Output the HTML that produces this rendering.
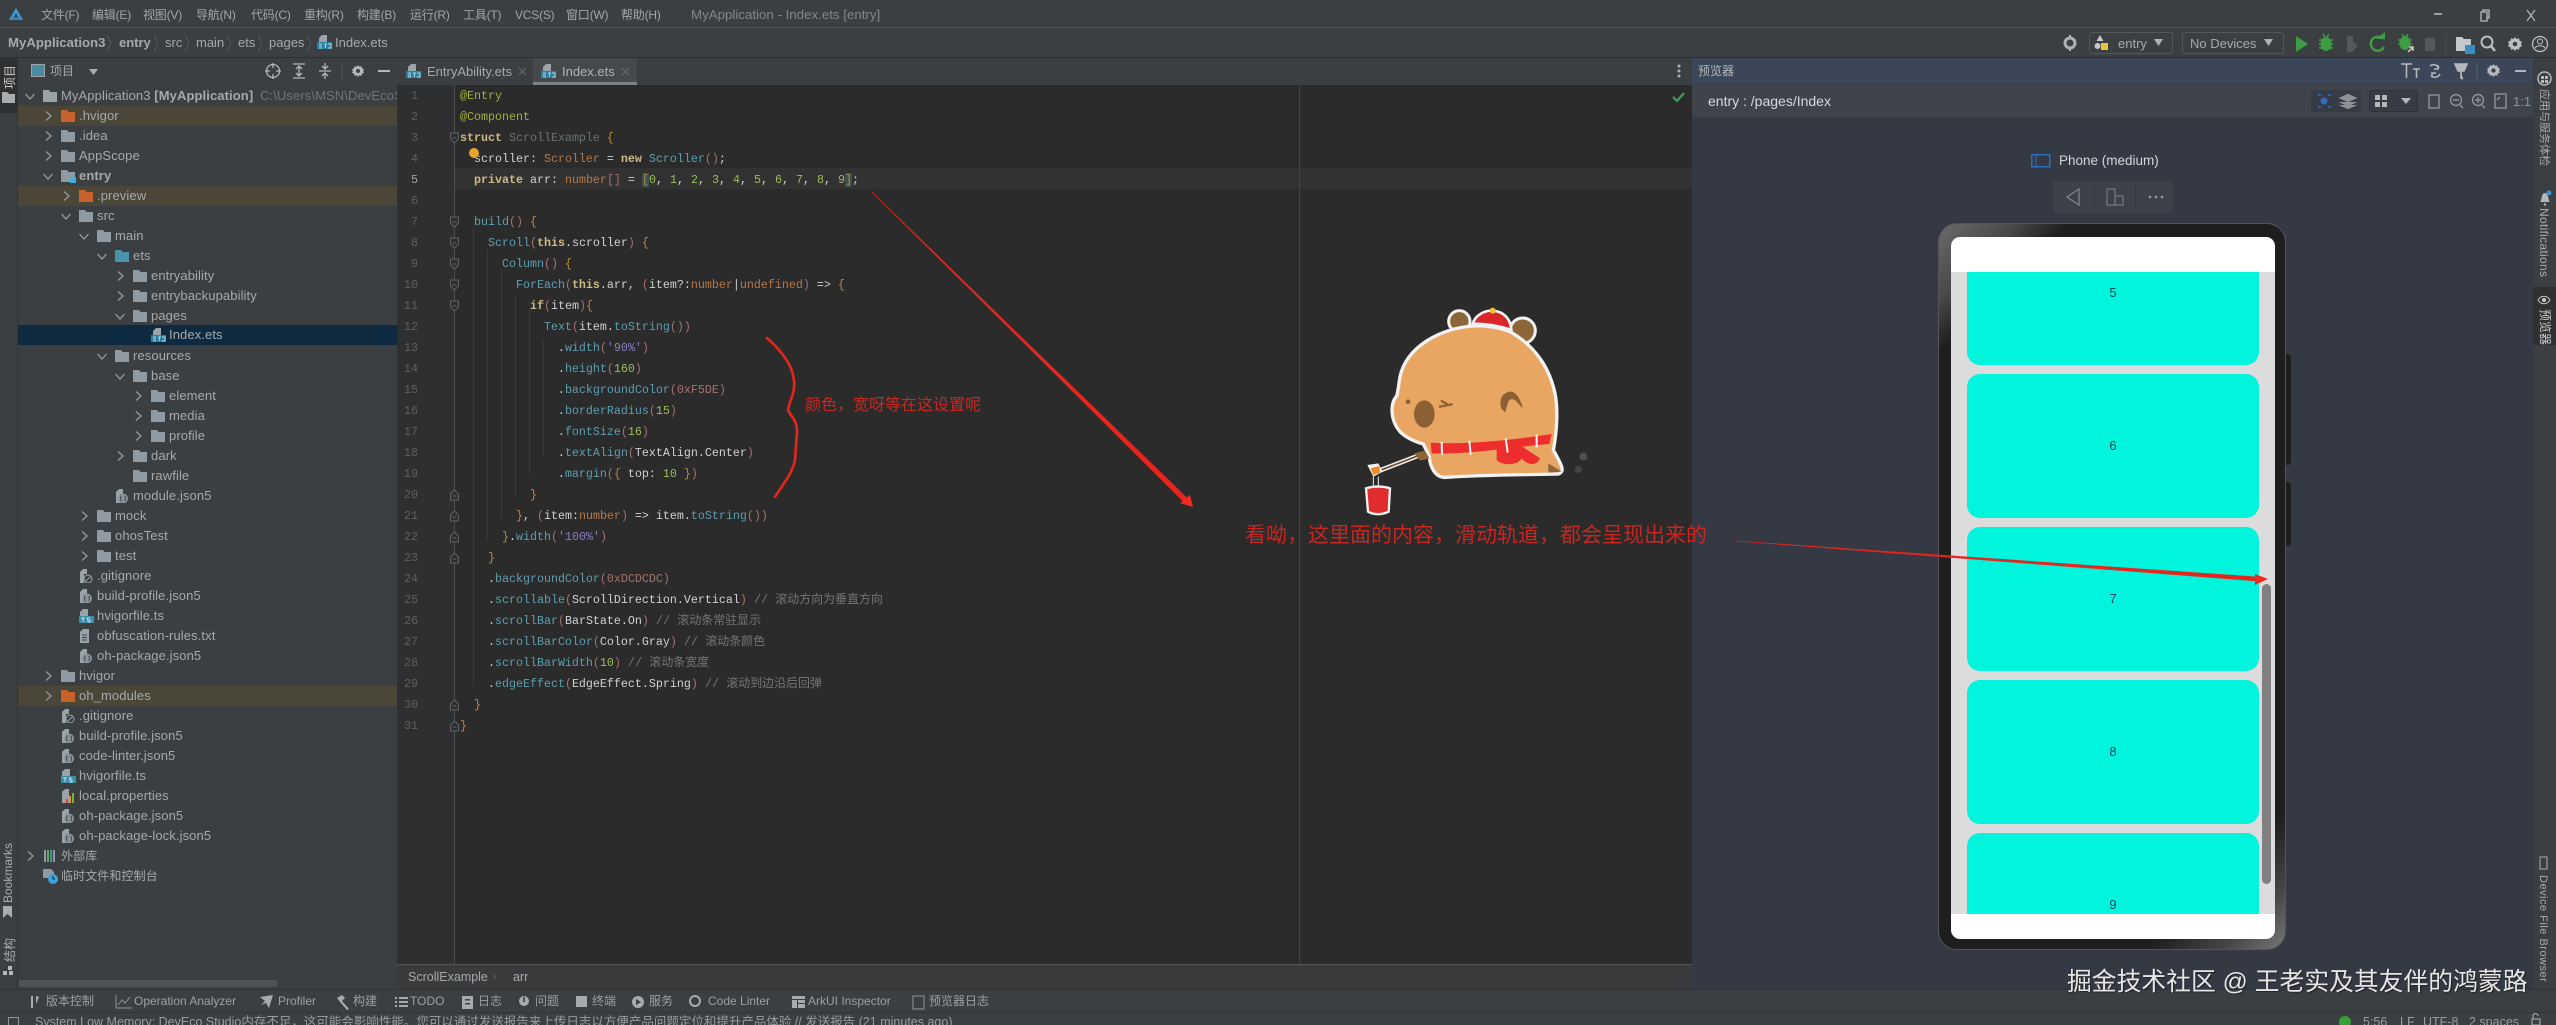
<!DOCTYPE html>
<html lang="zh"><head><meta charset="utf-8"><title>MyApplication - Index.ets</title>
<style>
*{margin:0;padding:0;box-sizing:border-box}
html,body{width:2556px;height:1025px;overflow:hidden;background:#3c3f41}
body{position:relative;font-family:"Liberation Sans","Noto Sans CJK SC",sans-serif;font-size:13px;color:#a6a9ab}
.a,.t0,svg.p{position:absolute}
.t0{white-space:nowrap;line-height:16px}
.mn{font-size:12px;letter-spacing:-.2px;color:#a3a6a8}
.r{position:absolute;left:18px;width:379px;height:20px;line-height:20px;white-space:nowrap}
.r>span{position:absolute;left:calc(var(--x) - 18px);top:0;font-size:13px;letter-spacing:.1px}
.r>svg{position:absolute;top:3px;width:14px;height:14px;left:calc(var(--x) - 36px)}
.r>svg.c{left:calc(var(--x) - 55px);width:12px;height:12px;top:4px;color:#979b9d}
.o{background:#4a4738}
pre{font-family:"Liberation Mono","Noto Sans CJK SC",monospace;font-size:11.67px;line-height:21px;position:absolute}
.k{color:#cdbb85;font-weight:bold}.an{color:#a3ae3c}.d{color:#68736d}.y{color:#b3784a}.m{color:#5c9eae}.n{color:#9cbc5a}.s{color:#8d7cc3}.b{color:#b9893f}.w{color:#cfd2d2}.g{color:#757575;font-size:11.95px}.v{color:#5e7f8a}.p2{color:#a5726f}
.tb{font-size:12px;color:#9da0a2}
.vr{position:absolute;writing-mode:vertical-rl;white-space:nowrap;font-size:12px;color:#a8abad}
.vl{position:absolute;writing-mode:vertical-rl;transform:rotate(180deg);white-space:nowrap;font-size:12px;color:#a8abad}
.card{position:absolute;left:1967px;width:292px;height:144px;background:#00f5dc;border-radius:13px;text-align:center;line-height:144px;color:#124a55;font-size:13px}
</style></head><body>
<svg width="0" height="0" style="position:absolute">
<defs>
<symbol id="cr" viewBox="0 0 12 12"><path d="M4 1.5 9 6 4 10.500" fill="none" stroke="currentColor" stroke-width="1.300"/></symbol>
<symbol id="cd" viewBox="0 0 12 12"><path d="M1.500 4 6 9 10.500 4" fill="none" stroke="currentColor" stroke-width="1.300"/></symbol>
<symbol id="fo" viewBox="0 0 14 14"><path d="M0 1h6l1.500 2H14v10H0z" fill="currentColor"/></symbol>
<symbol id="js" viewBox="0 0 14 14"><path d="M1 3 4 0h4v5H5v9H1z" fill="#9aa3a8"/><circle cx="8" cy="9.500" r="5" fill="#8b9499"/><path d="M6.500 7c-1 0-.6 2.500-1.300 2.500.7 0 .3 2.500 1.300 2.500M9.500 7c1 0 .6 2.500 1.300 2.500-.7 0-.3 2.500-1.300 2.500" fill="none" stroke="#3c3f41"/></symbol>
<symbol id="gi" viewBox="0 0 14 14"><path d="M1 3 4 0h4v5H5v9H1z" fill="#9aa3a8"/><circle cx="9" cy="10" r="4" fill="#3c3f41" stroke="#9aa3a8"/><path d="m6.500 12.500 5-5" stroke="#9aa3a8"/></symbol>
<symbol id="ts" viewBox="0 0 15 15"><path d="M4 0h5v7H1V3z" fill="#9aa3a8"/><rect y="7" width="15" height="7" fill="#3b8fa8"/><path d="M2 9h4M4 9v4M11 9H8.500v2H11v2H8.500" stroke="#cde" fill="none"/></symbol>
<symbol id="et" viewBox="0 0 15 15"><path d="M5 0h5v7H2V3z" fill="#9aa3a8"/><rect y="7" width="15" height="7" fill="#2f7fa3"/><path d="M2 9h3M2 11h3M2 13h3M7 9h3M8.500 9v4M11 13h3V9h-3" stroke="#a8d4e8" fill="none"/></symbol>
<symbol id="tx" viewBox="0 0 14 14"><path d="M1 3 4 0h6v14H1z" fill="#9aa3a8"/><path d="M3 6h5M3 8.500h5M3 11h5" stroke="#3c3f41"/></symbol>
<symbol id="ge" viewBox="0 0 14 14"><path d="M7 0l1.500 2 2.500-.7.600 2.500 2.400 1-1 2.200 1 2.200-2.400 1-.6 2.500-2.500-.7L7 14l-1.500-2-2.500.7-.6-2.500L0 9.200 1 7 0 4.800l2.400-1L3 1.300l2.500.7z" fill="currentColor"/><circle cx="7" cy="7" r="2.300" fill="#3c3f41"/></symbol>
</defs></svg>

<!-- title bar -->
<div class="a" style="left:0;top:0;width:2556px;height:28px;background:#3c3f41;border-bottom:1px solid #55585a"></div>
<svg class="p" style="left:8px;top:7px" width="16" height="15" viewBox="0 0 16 15"><path d="M8 1 1 13h3l4-7 4 7h3z" fill="#3a9fd8"/><path d="M3 13h10l-2-3H5z" fill="#2f7fb8"/></svg>
<span class="t0 mn" style="left:41px;top:7px">文件(F)</span><span class="t0 mn" style="left:92px;top:7px">编辑(E)</span><span class="t0 mn" style="left:143px;top:7px">视图(V)</span><span class="t0 mn" style="left:196px;top:7px">导航(N)</span><span class="t0 mn" style="left:251px;top:7px">代码(C)</span><span class="t0 mn" style="left:304px;top:7px">重构(R)</span><span class="t0 mn" style="left:357px;top:7px">构建(B)</span><span class="t0 mn" style="left:410px;top:7px">运行(R)</span><span class="t0 mn" style="left:463px;top:7px">工具(T)</span><span class="t0 mn" style="left:515px;top:7px">VCS(S)</span><span class="t0 mn" style="left:566px;top:7px">窗口(W)</span><span class="t0 mn" style="left:621px;top:7px">帮助(H)</span>
<span class="t0" style="left:691px;top:7px;color:#83868a;font-size:13.300px">MyApplication - Index.ets [entry]</span>
<svg class="p" style="left:2425px;top:6px" width="120" height="18" viewBox="0 0 120 18"><path d="M9 8h8" stroke="#bbb" stroke-width="1.500"/><path d="M56 6h6v9h-6zM58 6V4h6v8h-2" fill="none" stroke="#bbb" stroke-width="1.300"/><path d="m102 4 8 11M110 4l-8 11" stroke="#bbb" stroke-width="1.100"/></svg>

<!-- breadcrumb / toolbar -->
<div class="a" style="left:0;top:29px;width:2556px;height:29px;background:#3c3f41;border-bottom:1px solid #2d2f30"></div>
<b class="t0" style="left:8px;top:35px;font-size:13.200px">MyApplication3</b><b class="t0" style="left:119px;top:35px;font-size:13px">entry</b>
<span class="t0" style="left:165px;top:35px">src</span><span class="t0" style="left:196px;top:35px">main</span><span class="t0" style="left:238px;top:35px">ets</span><span class="t0" style="left:269px;top:35px">pages</span>
<span class="t0" style="left:335px;top:35px">Index.ets</span>
<svg class="p" style="left:317px;top:35px" width="15" height="15"><use href="#et"/></svg>
<svg class="p" style="left:0;top:33px" width="320" height="20" fill="none" stroke="#55585a"><path d="m107 2 4 8-4 8M154 2l4 8-4 8M185 2l4 8-4 8M227 2l4 8-4 8M258 2l4 8-4 8M307 2l4 8-4 8"/></svg>

<svg class="p" style="left:2060px;top:33px" width="20" height="20"><circle cx="10" cy="10" r="5" fill="none" stroke="#afb1b3" stroke-width="3"/><path d="M10 2v3M10 15v3" stroke="#afb1b3" stroke-width="2"/></svg>
<div class="a" style="left:2089px;top:32px;width:84px;height:22px;border:1px solid #55585a;border-radius:3px"></div>
<svg class="p" style="left:2094px;top:35px" width="16" height="17"><path d="M6 0l3.500 6h-7z" fill="#c4c6c8"/><circle cx="3.500" cy="11" r="3" fill="#c4c6c8"/><rect x="7" y="8" width="7" height="7" fill="#e8c43a"/></svg>
<span class="t0" style="left:2118px;top:36px;font-size:13px">entry</span>
<svg class="p" style="left:2154px;top:39px" width="10" height="8"><path d="M0 0h9L4.500 7z" fill="#afb1b3"/></svg>
<div class="a" style="left:2182px;top:32px;width:102px;height:22px;border:1px solid #55585a;border-radius:3px"></div>
<span class="t0" style="left:2190px;top:36px;font-size:13px">No Devices</span>
<svg class="p" style="left:2264px;top:39px" width="10" height="8"><path d="M0 0h9L4.500 7z" fill="#afb1b3"/></svg>
<svg class="p" style="left:2290px;top:30px" width="266" height="28" viewBox="0 0 266 28">
<path d="M6 6v16l12-8z" fill="#3f9c43"/>
<ellipse cx="36" cy="14" rx="5.500" ry="7" fill="#3f9c43"/><path d="M29 10h14M29 14h14M29 18h14M33 4l2 3M39 4l-2 3" stroke="#3f9c43" stroke-width="1.500"/>
<path d="M57 6h6v16h-6zM63 11l5 5-5 5z" fill="#54585a"/>
<g transform="translate(-8 0)"><path d="M101 9a7 7 0 1 0 1 8" fill="none" stroke="#3f9c43" stroke-width="2.500"/><path d="M94 9h9V2z" fill="#3f9c43"/></g>
<g transform="translate(-9 0)"><ellipse cx="124" cy="13" rx="5.500" ry="7" fill="#3f9c43"/><path d="M117 10h14M117 14h14M121 4l2 3M127 4l-2 3" stroke="#3f9c43" stroke-width="1.500"/><path d="M127 22l5-5M128 17h4v4" stroke="#ccc" stroke-width="1.500" fill="none"/></g>
<rect x="135" y="8" width="10" height="13" fill="#55585a"/>
<path d="M156 4v22" stroke="#4c4f51"/>
<g transform="translate(-11 0)"><path d="M177 7h6l2 2h7v12h-15z" fill="#c4c8cc"/><rect x="186" y="15" width="10" height="9" fill="#3a8fc0"/>
<circle cx="208" cy="12" r="5.500" fill="none" stroke="#bcbec0" stroke-width="2"/><path d="m212 16 4 5" stroke="#bcbec0" stroke-width="2.500"/>
<use href="#ge" x="229" y="7" width="14" height="14" color="#bcbec0"/>
<circle cx="261" cy="14" r="7.500" fill="none" stroke="#bcbec0" stroke-width="1.300"/><circle cx="261" cy="11.500" r="2.500" fill="none" stroke="#bcbec0"/><path d="M256 18c2-3 8-3 10 0" fill="none" stroke="#bcbec0"/></g>
</svg>

<!-- left strip -->
<div class="a" style="left:0;top:58px;width:18px;height:931px;background:#3c3f41;border-right:1px solid #323436"></div>
<div class="a" style="left:0;top:58px;width:18px;height:55px;background:#2e3032"></div>
<span class="vl" style="left:1px;top:65px;text-orientation:sideways;font-size:12px;color:#c8cacc">项目</span>
<svg class="p" style="left:2px;top:92px" width="14" height="12"><path d="M0 0h5l2 2h6v9H0z" fill="#a8acae"/></svg>
<span class="vl" style="left:1px;top:843px;">Bookmarks</span>
<svg class="p" style="left:3px;top:906px" width="10" height="12"><path d="M0 0h9v12L4.500 8 0 12z" fill="#a8acae"/></svg>
<span class="vl" style="left:1px;top:938px;text-orientation:sideways">结构</span>
<svg class="p" style="left:3px;top:966px" width="11" height="11"><path d="M5 0h4v4H5zM0 5h4v4H0zM6 5h4v4H6z" fill="#b4b8ba"/></svg>

<!-- project panel -->
<div class="a" style="left:18px;top:58px;width:379px;height:26px;background:#3c3f41"></div>
<svg class="p" style="left:31px;top:64px" width="14" height="14"><rect width="13" height="12" fill="#4a8ba0" stroke="#9aa3a8" x=".5" y=".5"/></svg>
<span class="t0" style="left:50px;top:63px;font-size:12px">项目</span>
<svg class="p" style="left:89px;top:69px" width="10" height="7"><path d="M0 0h9L4.500 6z" fill="#a8acae"/></svg>
<svg class="p" style="left:262px;top:61px" width="135" height="20" viewBox="0 0 135 20" fill="none" stroke="#b4b8ba" stroke-width="1.300"><circle cx="11" cy="10" r="6.500"/><path d="M11 2v5M11 13v5M3 10h5M14 10h5"/><path d="M31 3h12M31 17h12M37 6v8M34 8l3-3 3 3M34 12l3 3 3-3"/><path d="M57 10h12M63 2v6M63 12v6M60 5l3 3 3-3M60 15l3-3 3 3"/><path d="M80 2v17" stroke="#4c4f51"/><use href="#ge" x="90" y="4" width="12" height="12" color="#b4b8ba" stroke="none"/><path d="M116 10h12" stroke-width="2"/></svg>

<div class="a" style="left:18px;top:84px;width:379px;height:905px;background:#3c3f41"></div>
<div class="r o" style="top:106px;--x:79px;"><svg class="c"><use href="#cr"/></svg><svg style="color:#c8622d"><use href="#fo"/></svg><span>.hvigor</span></div>
<div class="r o" style="top:186px;--x:97px;"><svg class="c"><use href="#cr"/></svg><svg style="color:#c8622d"><use href="#fo"/></svg><span>.preview</span></div>
<div class="r o" style="top:686px;--x:79px;"><svg class="c"><use href="#cr"/></svg><svg style="color:#c8622d"><use href="#fo"/></svg><span>oh_modules</span></div>
<div class="r" style="top:325px;--x:169px;background:#0d2a40"><svg style="width:15px;height:15px"><use href="#et"/></svg><span>Index.ets</span></div>

<div class="r" style="top:86px;--x:61px;"><svg class="c" ><use href="#cd"/></svg><svg style="color:#9aa3a8"><use href="#fo"/></svg><span>MyApplication3 <b>[MyApplication]</b> <i style="font-style:normal;color:#6f7476;margin-left:3px">C:\Users\MSN\DevEcoS</i></span></div>
<div class="r" style="top:126px;--x:79px"><svg class="c"><use href="#cr"/></svg><svg style="color:#8f9aa2"><use href="#fo"/></svg><span>.idea</span></div>
<div class="r" style="top:146px;--x:79px"><svg class="c"><use href="#cr"/></svg><svg style="color:#8f9aa2"><use href="#fo"/></svg><span>AppScope</span></div>
<div class="r" style="top:166px;--x:79px"><svg class="c"><use href="#cd"/></svg><svg style="color:#8f9aa2"><use href="#fo"/></svg><span><b>entry</b></span></div>
<div class="a" style="left:70px;top:177px;width:6px;height:6px;background:#3fb0dc"></div>
<div class="r" style="top:206px;--x:97px"><svg class="c"><use href="#cd"/></svg><svg style="color:#8f9aa2"><use href="#fo"/></svg><span>src</span></div>
<div class="r" style="top:226px;--x:115px"><svg class="c"><use href="#cd"/></svg><svg style="color:#8f9aa2"><use href="#fo"/></svg><span>main</span></div>
<div class="r" style="top:246px;--x:133px"><svg class="c"><use href="#cd"/></svg><svg style="color:#4a93ad"><use href="#fo"/></svg><span>ets</span></div>
<div class="r" style="top:266px;--x:151px"><svg class="c"><use href="#cr"/></svg><svg style="color:#8f9aa2"><use href="#fo"/></svg><span>entryability</span></div>
<div class="r" style="top:286px;--x:151px"><svg class="c"><use href="#cr"/></svg><svg style="color:#8f9aa2"><use href="#fo"/></svg><span>entrybackupability</span></div>
<div class="r" style="top:306px;--x:151px"><svg class="c"><use href="#cd"/></svg><svg style="color:#8f9aa2"><use href="#fo"/></svg><span>pages</span></div>
<div class="r" style="top:346px;--x:133px"><svg class="c"><use href="#cd"/></svg><svg style="color:#8f9aa2"><use href="#fo"/></svg><span>resources</span></div>
<div class="r" style="top:366px;--x:151px"><svg class="c"><use href="#cd"/></svg><svg style="color:#8f9aa2"><use href="#fo"/></svg><span>base</span></div>
<div class="r" style="top:386px;--x:169px"><svg class="c"><use href="#cr"/></svg><svg style="color:#8f9aa2"><use href="#fo"/></svg><span>element</span></div>
<div class="r" style="top:406px;--x:169px"><svg class="c"><use href="#cr"/></svg><svg style="color:#8f9aa2"><use href="#fo"/></svg><span>media</span></div>
<div class="r" style="top:426px;--x:169px"><svg class="c"><use href="#cr"/></svg><svg style="color:#8f9aa2"><use href="#fo"/></svg><span>profile</span></div>
<div class="r" style="top:446px;--x:151px"><svg class="c"><use href="#cr"/></svg><svg style="color:#8f9aa2"><use href="#fo"/></svg><span>dark</span></div>
<div class="r" style="top:466px;--x:151px"><svg style="color:#8f9aa2"><use href="#fo"/></svg><span>rawfile</span></div>
<div class="r" style="top:486px;--x:133px"><svg><use href="#js"/></svg><span>module.json5</span></div>
<div class="r" style="top:506px;--x:115px"><svg class="c"><use href="#cr"/></svg><svg style="color:#8f9aa2"><use href="#fo"/></svg><span>mock</span></div>
<div class="r" style="top:526px;--x:115px"><svg class="c"><use href="#cr"/></svg><svg style="color:#8f9aa2"><use href="#fo"/></svg><span>ohosTest</span></div>
<div class="r" style="top:546px;--x:115px"><svg class="c"><use href="#cr"/></svg><svg style="color:#8f9aa2"><use href="#fo"/></svg><span>test</span></div>
<div class="r" style="top:566px;--x:97px"><svg><use href="#gi"/></svg><span>.gitignore</span></div>
<div class="r" style="top:586px;--x:97px"><svg><use href="#js"/></svg><span>build-profile.json5</span></div>
<div class="r" style="top:606px;--x:97px"><svg style="width:15px;height:15px"><use href="#ts"/></svg><span>hvigorfile.ts</span></div>
<div class="r" style="top:626px;--x:97px"><svg><use href="#tx"/></svg><span>obfuscation-rules.txt</span></div>
<div class="r" style="top:646px;--x:97px"><svg><use href="#js"/></svg><span>oh-package.json5</span></div>
<div class="r" style="top:666px;--x:79px"><svg class="c"><use href="#cr"/></svg><svg style="color:#8f9aa2"><use href="#fo"/></svg><span>hvigor</span></div>
<div class="r" style="top:706px;--x:79px"><svg><use href="#gi"/></svg><span>.gitignore</span></div>
<div class="r" style="top:726px;--x:79px"><svg><use href="#js"/></svg><span>build-profile.json5</span></div>
<div class="r" style="top:746px;--x:79px"><svg><use href="#js"/></svg><span>code-linter.json5</span></div>
<div class="r" style="top:766px;--x:79px"><svg style="width:15px;height:15px"><use href="#ts"/></svg><span>hvigorfile.ts</span></div>
<div class="r" style="top:786px;--x:79px"><svg viewBox="0 0 14 14"><path d="M1 3 4 0h4v14H1z" fill="#9aa3a8"/><path d="M5 10h2v4H5z" fill="#d8502a"/><path d="M8 7h2v7H8z" fill="#e09a2a"/><path d="M11 4h2v10h-2z" fill="#7fb03a"/></svg><span>local.properties</span></div>
<div class="r" style="top:806px;--x:79px"><svg><use href="#js"/></svg><span>oh-package.json5</span></div>
<div class="r" style="top:826px;--x:79px"><svg><use href="#js"/></svg><span>oh-package-lock.json5</span></div>
<div class="r" style="top:846px;--x:61px"><svg class="c"><use href="#cr"/></svg><svg viewBox="0 0 14 14"><path d="M1 1h2v12H1z" fill="#8f9aa2"/><path d="M4 1h2v12H4z" fill="#6fa84a"/><path d="M7 1h2v12H7z" fill="#4a93ad"/><path d="M10 1h2v12h-2z" fill="#8f9aa2"/></svg><span style="font-size:12px">外部库</span></div>
<div class="r" style="top:866px;--x:61px"><svg viewBox="0 0 14 14" style="overflow:visible"><path d="M0 0h8l3 3v6H0z" fill="#8f9aa2"/><circle cx="10" cy="10" r="5" fill="#3aa3dc"/><path d="M10 7v3h2" stroke="#123" fill="none"/></svg><span style="font-size:12px">临时文件和控制台</span></div>
<div class="a" style="left:19px;top:980px;width:258px;height:7px;background:#505355"></div>

<!-- editor -->
<div class="a" style="left:397px;top:58px;width:1295px;height:27px;background:#3c3f41"></div>
<div class="a" style="left:533px;top:58px;width:104px;height:27px;background:#46494b;border-bottom:3px solid #7e8285"></div>
<svg class="p" style="left:406px;top:64px" width="15" height="15"><use href="#et"/></svg>
<span class="t0" style="left:427px;top:64px;font-size:13px">EntryAbility.ets</span>
<svg class="p" style="left:518px;top:67px" width="9" height="9"><path d="m1 1 7 7M8 1 1 8" stroke="#676a6c"/></svg>
<svg class="p" style="left:541px;top:64px" width="15" height="15"><use href="#et"/></svg>
<span class="t0" style="left:562px;top:64px;font-size:13px;color:#b0b3b5">Index.ets</span>
<svg class="p" style="left:621px;top:67px" width="9" height="9"><path d="m1 1 7 7M8 1 1 8" stroke="#6c6f71"/></svg>
<svg class="p" style="left:1677px;top:64px" width="4" height="14"><circle cx="2" cy="2" r="1.500" fill="#afb1b3"/><circle cx="2" cy="7" r="1.500" fill="#afb1b3"/><circle cx="2" cy="12" r="1.500" fill="#afb1b3"/></svg>

<div class="a" style="left:397px;top:85px;width:1295px;height:880px;background:#2b2b2b"></div>
<div class="a" style="left:397px;top:85px;width:58px;height:880px;background:#2d2f30"></div>
<div class="a" style="left:455px;top:168px;width:1237px;height:21px;background:#323232"></div>
<div class="a" style="left:1299px;top:85px;width:1px;height:880px;background:#454545"></div>
<div class="a" style="left:454px;top:85px;width:1px;height:880px;background:#4c4e50"></div>
<div class="a" style="left:473px;top:228px;width:1px;height:458px;background:#3a3a3a"></div>
<div class="a" style="left:487px;top:250px;width:1px;height:290px;background:#3a3a3a"></div>
<div class="a" style="left:501px;top:270px;width:1px;height:248px;background:#3a3a3a"></div>
<div class="a" style="left:515px;top:296px;width:1px;height:200px;background:#3a3a3a"></div>
<div class="a" style="left:529px;top:310px;width:1px;height:165px;background:#3a3a3a"></div>
<div class="a" style="left:543px;top:340px;width:1px;height:115px;background:#3a3a3a"></div>
<svg class="p" style="left:449px;top:85px" width="12" height="660" fill="#2d2f30" stroke="#5f6264">
<g transform="translate(0 -4)"><path d="M1.500 52h8v6l-4 4-4-4zM3.500 57h4M1.500 136h8v6l-4 4-4-4zM3.500 141h4M1.500 157h8v6l-4 4-4-4zM3.500 162h4M1.500 178h8v6l-4 4-4-4zM3.500 183h4M1.500 199h8v6l-4 4-4-4zM3.500 204h4M1.500 220h8v6l-4 4-4-4zM3.500 225h4"/></g>
<g transform="translate(0 9)"><path d="M1.500 406h8v-6l-4-4-4 4zM3.500 402h4M1.500 427h8v-6l-4-4-4 4zM3.500 423h4M1.500 448h8v-6l-4-4-4 4zM3.500 444h4M1.500 469h8v-6l-4-4-4 4zM3.500 465h4M1.500 616h8v-6l-4-4-4 4zM3.500 612h4M1.500 637h8v-6l-4-4-4 4zM3.500 633h4"/></g></svg>
<pre style="left:397px;top:85.500px;width:21px;text-align:right;color:#5d6062">1
2
3
4
<span style="color:#a4a3a3">5</span>
6
7
8
9
10
11
12
13
14
15
16
17
18
19
20
21
22
23
24
25
26
27
28
29
30
31</pre>
<pre style="left:460px;top:85.500px;color:#cfd2d2"><span class="an">@Entry</span>
<span class="an">@Component</span>
<span class="k">struct</span> <span class="d">ScrollExample</span> <span class="b">{</span>
  scroller: <span class="y">Scroller</span> = <span class="k">new</span> <span class="m">Scroller</span><span class="p2">()</span>;
  <span class="k">private</span> arr: <span class="y">number</span><span class="p2">[]</span> = <span class="b" style="background:#3b514d">[</span><span class="n">0</span>, <span class="n">1</span>, <span class="n">2</span>, <span class="n">3</span>, <span class="n">4</span>, <span class="n">5</span>, <span class="n">6</span>, <span class="n">7</span>, <span class="n">8</span>, <span class="n">9</span><span class="b" style="background:#3b514d">]</span>;

  <span class="m">build</span><span class="p2">()</span> <span class="b">{</span>
    <span class="m">Scroll</span><span class="p2">(</span><span class="k">this</span>.scroller<span class="p2">)</span> <span class="b">{</span>
      <span class="m">Column</span><span class="p2">()</span> <span class="b">{</span>
        <span class="m">ForEach</span><span class="p2">(</span><span class="k">this</span>.arr, <span class="p2">(</span>item?:<span class="y">number</span>|<span class="y">undefined</span><span class="p2">)</span> =&gt; <span class="b">{</span>
          <span class="k">if</span><span class="p2">(</span>item<span class="p2">)</span><span class="b">{</span>
            <span class="m">Text</span><span class="p2">(</span>item.<span class="m">toString</span><span class="p2">())</span>
              .<span class="m">width</span><span class="p2">(</span><span class="s">'90%'</span><span class="p2">)</span>
              .<span class="m">height</span><span class="p2">(</span><span class="n">160</span><span class="p2">)</span>
              .<span class="m">backgroundColor</span><span class="p2">(0xF5DE)</span>
              .<span class="m">borderRadius</span><span class="p2">(</span><span class="n">15</span><span class="p2">)</span>
              .<span class="m">fontSize</span><span class="p2">(</span><span class="n">16</span><span class="p2">)</span>
              .<span class="m">textAlign</span><span class="p2">(</span>TextAlign.Center<span class="p2">)</span>
              .<span class="m">margin</span><span class="p2">(</span><span class="b">{</span> top: <span class="n">10</span> <span class="b">}</span><span class="p2">)</span>
          <span class="b">}</span>
        <span class="b">}</span>, <span class="p2">(</span>item:<span class="y">number</span><span class="p2">)</span> =&gt; item.<span class="m">toString</span><span class="p2">()</span><span class="p2">)</span>
      <span class="b">}</span>.<span class="m">width</span><span class="p2">(</span><span class="s">'100%'</span><span class="p2">)</span>
    <span class="b">}</span>
    .<span class="m">backgroundColor</span><span class="p2">(0xDCDCDC)</span>
    .<span class="m">scrollable</span><span class="p2">(</span>ScrollDirection.Vertical<span class="p2">)</span> <span class="g">// 滚动方向为垂直方向</span>
    .<span class="m">scrollBar</span><span class="p2">(</span>BarState.On<span class="p2">)</span> <span class="g">// 滚动条常驻显示</span>
    .<span class="m">scrollBarColor</span><span class="p2">(</span>Color.Gray<span class="p2">)</span> <span class="g">// 滚动条颜色</span>
    .<span class="m">scrollBarWidth</span><span class="p2">(</span><span class="n">10</span><span class="p2">)</span> <span class="g">// 滚动条宽度</span>
    .<span class="m">edgeEffect</span><span class="p2">(</span>EdgeEffect.Spring<span class="p2">)</span> <span class="g">// 滚动到边沿后回弹</span>
  <span class="b">}</span>
<span class="b">}</span></pre>
<svg class="p" style="left:468px;top:147px" width="12" height="12"><circle cx="6" cy="6" r="5" fill="#e8a32e"/></svg>
<svg class="p" style="left:1672px;top:91px" width="13" height="11"><path d="m1 6 4 4 7-8" fill="none" stroke="#3f9c5a" stroke-width="2.200"/></svg>
<div class="a" style="left:397px;top:964px;width:1295px;height:25px;background:#393b3d;border-top:1px solid #555"></div>
<span class="t0" style="left:408px;top:969px;font-size:12.500px">ScrollExample</span>
<span class="t0" style="left:493px;top:969px;font-size:11px;color:#666">›</span>
<span class="t0" style="left:513px;top:969px;font-size:12.500px">arr</span>

<!-- preview -->
<div class="a" style="left:1692px;top:58px;width:841px;height:26px;background:#3b4759"></div>
<span class="t0" style="left:1698px;top:63px;font-size:12px;color:#b4b8bc">预览器</span>
<svg class="p" style="left:2398px;top:60px" width="135" height="22" viewBox="0 0 135 22" fill="none" stroke="#b4b8ba" stroke-width="1.600"><path d="M3 4h11M8.500 4v14M15 9h7M18.500 9v9"/><g transform="translate(-5 0)"><path d="M37 6a6 6 0 0 1 9 2M47 14a6 6 0 0 1-9 2M45 5v4h-4M39 17v-4h4"/></g><path d="M57 4h12l-3 7h-6zM63 11v7l2 1" fill="#b4b8ba"/><path d="M79 3v16" stroke="#4c5868"/><use href="#ge" x="89" y="4" width="13" height="13" color="#b4b8ba" stroke="none"/><path d="M117 11h11" stroke-width="2"/></svg>
<div class="a" style="left:1692px;top:85px;width:841px;height:32px;background:#3e434c"></div>
<span class="t0" style="left:1708px;top:93px;font-size:14px;color:#d8dadc">entry : /pages/Index</span>
<div class="a" style="left:2311px;top:90px;width:50px;height:22px;background:#363b44;border-radius:3px"></div>
<div class="a" style="left:2369px;top:90px;width:49px;height:22px;background:#363b44;border:1px solid #2f333b;border-radius:3px"></div>
<svg class="p" style="left:2311px;top:90px" width="222" height="22" viewBox="0 0 222 22"><path d="M7 5h3M7 17h3M17 5h3M17 17h3" stroke="#2d6cc0" stroke-width="1.500"/><circle cx="13" cy="11" r="3.500" fill="#2d6cc0"/><g transform="translate(2 0)"><path d="M26 8l9-4 9 4-9 4zM26 12l9 4 9-4M26 15l9 4 9-4" fill="#8d9296" stroke="#8d9296" stroke-width=".5"/></g><path d="M64 5h5v5h-5zM64 12h5v5h-5zM71 12h5v5h-5zM71 5h5v5h-5z" fill="#b4b8ba"/><path d="M90 8h10l-5 6z" fill="#b4b8ba"/><g transform="translate(-2 0)" fill="none" stroke="#8f9498" stroke-width="1.400"><rect x="120" y="5" width="10" height="13"/><circle cx="147" cy="10" r="5.500"/><path d="M144 10h6M151 15l3 3"/><circle cx="169" cy="10" r="5.500"/><path d="M166 10h6M169 7v6M173 15l3 3"/><rect x="186" y="4" width="11" height="14"/><path d="m188 10 3-3"/></g><text x="202" y="16" fill="#8f9498" font-size="13" font-family="Liberation Sans">1:1</text></svg>
<div class="a" style="left:1692px;top:117px;width:841px;height:872px;background:#343944"></div>
<svg class="p" style="left:2031px;top:154px" width="20" height="14"><rect x=".75" y=".75" width="18" height="12" fill="none" stroke="#2a6fc4" stroke-width="1.500"/><path d="M5 1v12" stroke="#2a6fc4"/></svg>
<span class="t0" style="left:2059px;top:153px;font-size:13.500px;color:#d4d6d8">Phone (medium)</span>
<div class="a" style="left:2053px;top:181px;width:120px;height:32px;background:#3c414a;border-radius:2px"></div>
<svg class="p" style="left:2053px;top:181px" width="120" height="32" fill="none" stroke="#7f8489"><path d="M41 0v32M82 0v32" stroke="#343944"/><path d="M26 8 14 16l12 8z" stroke-width="1.300"/><path d="M54 8h8v16h-8zM62 15h8v9h-8" /><circle cx="97" cy="16" r="1.400" fill="#8f9498" stroke="none"/><circle cx="103" cy="16" r="1.400" fill="#8f9498" stroke="none"/><circle cx="109" cy="16" r="1.400" fill="#8f9498" stroke="none"/></svg>

<!-- phone -->
<div class="a" style="left:2286px;top:354px;width:5px;height:111px;background:#1e1e1e;border-radius:0 3px 3px 0"></div>
<div class="a" style="left:2286px;top:482px;width:5px;height:64px;background:#1e1e1e;border-radius:0 3px 3px 0"></div>
<div class="a" style="left:1938px;top:223px;width:348px;height:727px;border-radius:19px;background:linear-gradient(135deg,#6a6a6a 0,#4a4a4a 7%,#1e1e1e 12%,#1e1e1e 87%,#444 94%,#777 100%);border:1px solid #555"></div>
<div class="a" style="left:1951px;top:237px;width:324px;height:702px;background:#fff;border-radius:9px;overflow:hidden"></div>
<div class="a" style="left:1951px;top:272px;width:324px;height:642px;background:#dcdcdc"></div>
<div class="a" style="left:1951px;top:272px;width:324px;height:642px;overflow:hidden">
<div class="card" style="left:16px;top:-51px">5</div>
<div class="card" style="left:16px;top:102px">6</div>
<div class="card" style="left:16px;top:255px">7</div>
<div class="card" style="left:16px;top:408px">8</div>
<div class="card" style="left:16px;top:561px">9</div>
<div class="a" style="left:311px;top:312px;width:9px;height:300px;background:#808080;border-radius:5px"></div>
</div>

<!-- right strip -->
<div class="a" style="left:2533px;top:58px;width:23px;height:931px;background:#3c3f41"></div>
<svg class="p" style="left:2536px;top:70px" width="17" height="17"><circle cx="8.500" cy="8.500" r="6.500" fill="none" stroke="#b4b8ba" stroke-width="1.500"/><path d="M5 6h3v3H5zM9 6h3v3H9zM5 10h3v3H5zM9 10h3v3H9z" fill="#b4b8ba"/></svg>
<span class="vr" style="left:2537px;top:89px;font-size:11px;text-orientation:sideways">应用与服务体检</span>
<svg class="p" style="left:2537px;top:190px" width="16" height="16"><path d="M3 12c2-1 1-9 5-9s3 8 5 9z" fill="#b4b8ba"/><circle cx="8" cy="14.500" r="1.200" fill="#b4b8ba"/><circle cx="12" cy="3" r="2.500" fill="#3a8fd8"/></svg>
<span class="vr" style="left:2537px;top:208px;letter-spacing:.3px;font-size:12px">Notifications</span>
<div class="a" style="left:2533px;top:287px;width:23px;height:58px;background:#2e3032"></div>
<svg class="p" style="left:2537px;top:295px" width="14" height="10"><circle cx="7" cy="5" r="2" fill="#c8cacc"/><path d="M1 5c3-5 9-5 12 0-3 5-9 5-12 0z" fill="none" stroke="#c8cacc"/></svg>
<span class="vr" style="left:2537px;top:309px;font-size:12px;color:#c8cacc;text-orientation:sideways">预览器</span>
<svg class="p" style="left:2537px;top:856px" width="13" height="14"><rect x="3" y="1" width="7" height="12" fill="none" stroke="#a8abad"/></svg>
<span class="vr" style="left:2537px;top:875px;font-size:11px;letter-spacing:.5px">Device File Browser</span>

<!-- bottom -->
<div class="a" style="left:0;top:989px;width:2556px;height:23px;background:#3c3f41;border-top:1px solid #323436"></div>
<svg class="p" style="left:0;top:993px" width="960" height="19" fill="#a8abad" stroke="none">
<path d="M31 3h2v12h-2zM36 3l3 1-3 7z"/><path d="M116 2v13h16" fill="none" stroke="#8f9498"/><path d="m118 12 4-5 3 3 5-6" fill="none" stroke="#8f9498"/><path d="M260 4l13-2-4 13-3-5-5 2 4-4z"/><path d="M337 5l5-3 3 3-3 3 7 8-2 1-7-8z"/><path d="M395 4h2v2h-2zM399 4h9v2h-9zM395 8h2v2h-2zM399 8h9v2h-9zM395 12h2v2h-2zM399 12h9v2h-9z"/><path d="M462 3h11v13h-11z"/><rect x="465" y="6" width="5" height="1.500" fill="#3c3f41"/><rect x="465" y="10" width="5" height="1.500" fill="#3c3f41"/><circle cx="524" cy="8" r="5"/><rect x="523.200" y="4" width="1.700" height="5" fill="#3c3f41"/><path d="M576 3h11v11h-11z"/><circle cx="638" cy="9" r="6"/><path d="M636 6l5 3-5 3z" fill="#3c3f41"/><circle cx="695" cy="8" r="5" fill="none" stroke="#a8abad" stroke-width="2"/><path d="M792 3h13v3h-13zM792 7h5v8h-5zM798 7h7v3h-7zM798 11h7v4h-7z"/><path d="M913 3h11v13h-11z" fill="none" stroke="#8f9498"/></svg>
<span class="t0 tb" style="left:46px;top:993px">版本控制</span><span class="t0 tb" style="left:134px;top:993px">Operation Analyzer</span><span class="t0 tb" style="left:278px;top:993px">Profiler</span><span class="t0 tb" style="left:353px;top:993px">构建</span><span class="t0 tb" style="left:410px;top:993px">TODO</span><span class="t0 tb" style="left:478px;top:993px">日志</span><span class="t0 tb" style="left:535px;top:993px">问题</span><span class="t0 tb" style="left:592px;top:993px">终端</span><span class="t0 tb" style="left:649px;top:993px">服务</span><span class="t0 tb" style="left:708px;top:993px">Code Linter</span><span class="t0 tb" style="left:808px;top:993px">ArkUI Inspector</span><span class="t0 tb" style="left:929px;top:993px">预览器日志</span>
<div class="a" style="left:0;top:1012px;width:2556px;height:13px;background:#3c3f41;border-top:1px solid #323436;overflow:hidden"></div>
<div class="a" style="left:8px;top:1017px;width:11px;height:11px;border:1px solid #8f9498"></div>
<span class="t0" style="left:35px;top:1014px;font-size:12.500px;color:#9a9d9f">System Low Memory: DevEco Studio内存不足，这可能会影响性能。您可以通过发送报告来上传日志以方便产品问题定位和提升产品体验 // 发送报告 (21 minutes ago)</span>
<div class="a" style="left:2339px;top:1016px;width:12px;height:12px;border-radius:50%;background:#3a9e3a"></div>
<span class="t0" style="left:2363px;top:1014px;font-size:12.500px;color:#9a9d9f">5:56</span><span class="t0" style="left:2400px;top:1014px;font-size:12.500px;color:#9a9d9f">LF</span><span class="t0" style="left:2423px;top:1014px;font-size:12.500px;color:#9a9d9f">UTF-8</span><span class="t0" style="left:2469px;top:1014px;font-size:12.500px;color:#9a9d9f">2 spaces</span>
<svg class="p" style="left:2530px;top:1013px" width="14" height="12"><path d="M3 6V3a2.500 2.500 0 0 1 5 0M2 6h8v6H2z" fill="none" stroke="#9a9d9f" stroke-width="1.300"/></svg>

<!-- annotations -->
<svg class="p" style="left:0;top:0" width="2556" height="1025" viewBox="0 0 2556 1025">
<path d="M767 338C775 345 790 360 793 375 797 392 790 398 788 410 792 418 797 420 797 432L795 460C792 475 782 485 775 497" fill="none" stroke="#e5261f" stroke-width="2.600" stroke-linecap="round"/>
<path d="M872 192 1187 498 1184 502Z" fill="#e5261f" stroke="#e5261f" stroke-width=".6"/>
<path d="M1193 507 1180 503 1190 495Z" fill="#f02a20"/>
<path d="M1736 541 2258 577 2258 581Z" fill="#e5261f" stroke="#e5261f" stroke-width=".6"/>
<path d="M2268 579 2255 574 2255 585Z" fill="#f02a20"/>
</svg>
<span class="t0" style="left:805px;top:397px;font-size:16px;line-height:18px;color:#c42a24">颜色，宽呀等在这设置呢</span>
<span class="t0" style="left:1245px;top:524px;font-size:21px;line-height:24px;color:#c9261f">看呦，这里面的内容，滑动轨道，都会呈现出来的</span>

<!-- capybara -->
<svg class="p" style="left:1340px;top:290px" width="300" height="240" viewBox="0 0 900 720">
<circle cx="358" cy="94" r="32" fill="#8c6538" stroke="#f2f2f2" stroke-width="9"/>
<circle cx="548" cy="122" r="38" fill="#8c6538" stroke="#f2f2f2" stroke-width="9"/>
<path d="M398 102C405 75 435 60 460 62 490 65 512 85 514 120 480 108 430 100 398 102Z" fill="#d8262a" stroke="#f2f2f2" stroke-width="8"/>
<circle cx="458" cy="62" r="9" fill="#e8c63a"/>
<path d="M240 495 110 545" stroke="#f2f2f2" stroke-width="14" stroke-linecap="round"/>
<path d="M240 495 110 545" stroke="#6e4a28" stroke-width="5"/>
<path d="M400 108C300 115 200 170 180 260 175 290 175 300 170 318 150 340 150 390 180 425 200 445 225 455 250 462L268 500C270 530 285 565 320 562 420 555 520 555 655 552 675 545 668 530 640 480 650 430 655 360 645 310 630 240 590 170 510 125 475 112 440 106 400 108Z" fill="#e8a662" stroke="#f2f2f2" stroke-width="10"/>
<path d="M625 520 665 545 625 548Z" fill="#8c6538"/>
<path d="M222 490 255 482 268 505 240 512Z" fill="#8c6538"/>
<ellipse cx="253" cy="372" rx="31" ry="41" fill="#8c6034"/>
<circle cx="204" cy="335" r="7" fill="#8c6034"/>
<path d="M300 350 335 343M305 333 322 343" stroke="#8c6034" stroke-width="7" stroke-linecap="round" fill="none"/>
<path d="M484 355C475 325 490 305 515 305 535 310 545 340 548 355L530 335C520 325 510 325 505 335 500 350 498 360 495 368Z" fill="#8c6034"/>
<path d="M272 458C380 465 520 450 635 432L628 462C520 470 380 495 275 490Z" fill="#ee2d2d"/>
<path d="M470 470 535 462 600 505C590 530 560 525 545 505 535 525 490 530 470 510Z" fill="#ee2d2d"/>
<path d="M305 456 306 494M388 452 392 494M497 445 503 488M590 434 590 472" stroke="#f6f6f6" stroke-width="6"/>
<path d="M82 525 115 520 128 545 100 560Z" fill="#f5f5f5"/>
<path d="M92 535 118 528 120 548 100 555Z" fill="#ef8a28"/>
<path d="M78 595C100 588 130 588 150 595L146 665C125 675 100 675 84 665Z" fill="#e02c2c" stroke="#f2f2f2" stroke-width="7"/>
<path d="M100 560 100 592M115 560V592" stroke="#f2f2f2" stroke-width="3"/>
<circle cx="730" cy="500" r="12" fill="#4f4f4f"/><circle cx="715" cy="538" r="11" fill="#454545"/>
</svg>

<!-- watermark -->
<span class="t0" style="left:2067px;top:968px;font-size:24.800px;line-height:30px;color:#e6e6e6;text-shadow:1px 1px 1px #222">掘金技术社区 @ 王老实及其友伴的鸿蒙路</span>
</body></html>
